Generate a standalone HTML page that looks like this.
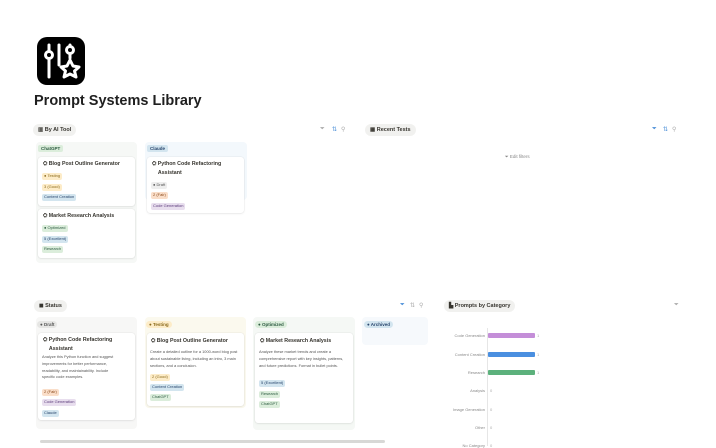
<!DOCTYPE html>
<html><head><meta charset="utf-8"><style>
*{margin:0;padding:0;box-sizing:border-box}
body{width:716px;height:446px;overflow:hidden;background:#fff;font-family:"Liberation Sans",sans-serif;color:#37352f;position:relative}
.a{position:absolute}
.chip{position:absolute;height:12px;border-radius:6px;background:#f1f1ef;font-size:5.5px;font-weight:bold;line-height:12px;padding:0 5px;color:#37352f;white-space:nowrap}
.col{position:absolute;border-radius:4px}
.card{position:absolute;background:#fff;border-radius:3px;box-shadow:0 0 0 .5px rgba(0,0,0,.06),0 1px 2px rgba(0,0,0,.06)}
.t{position:absolute;font-size:5.3px;font-weight:bold;line-height:8.5px;color:#37352f}
.tag{position:absolute;height:6.5px;line-height:6.5px;font-size:4px;padding:0 2px;border-radius:2px;white-space:nowrap}
.gh{position:absolute;height:7px;line-height:7px;font-size:4.5px;font-weight:bold;padding:0 3px;border-radius:2px}
.d{font-size:3.9px;line-height:6.8px;color:#555;position:absolute}
.lbl{position:absolute;font-size:4px;color:#888;text-align:right;width:70px}
.bar{position:absolute;height:5px;border-radius:1px}
.n{position:absolute;font-size:4px;color:#aaa}
.ic{position:absolute;font-size:6px;color:#aaa}
.ic.b{color:#4a8ed8}
</style></head><body>
<svg class="a" style="left:37px;top:37px" width="48" height="48" viewBox="0 0 48 48">
<rect width="48" height="48" rx="10" fill="#000"/>
<g stroke="#fff" stroke-width="3" fill="none" stroke-linecap="round">
<line x1="12" y1="8" x2="12" y2="40"/><circle cx="12" cy="18" r="3.5" fill="#000"/>
<line x1="22" y1="8" x2="22" y2="28"/>
<circle cx="33" cy="13" r="3.5"/><line x1="33" y1="8" x2="33" y2="9"/><line x1="33" y1="17" x2="33" y2="21"/>
<path d="M33 23 L36 29 L42 30 L37.5 34 L39 40 L33 37 L27 40 L28.5 34 L24 30 L30 29 Z" stroke-linejoin="round"/>
</g></svg>
<div class="a" style="left:34px;top:93px;font-size:14.5px;font-weight:bold;color:#1f1f1f">Prompt Systems Library</div>

<div class="chip" style="left:33px;top:124px">▥ By AI Tool</div>
<div class="ic" style="left:320px;top:126px">⏷</div><div class="ic b" style="left:332px;top:126px">⇅</div><div class="ic" style="left:341px;top:126px">⚲</div>

<div class="col" style="left:36px;top:142px;width:101px;height:121px;background:#f6f8f6"></div>
<div class="gh" style="left:38px;top:145px;background:#dbeddb;color:#2b593f">ChatGPT</div>
<div class="card" style="left:38px;top:157px;width:97px;height:49px"></div>
<div class="t" style="left:43px;top:160px">⛭ Blog Post Outline Generator</div>
<div class="tag" style="left:42px;top:173px;background:#fdecc8;color:#8a6a1c">● Testing</div>
<div class="tag" style="left:42px;top:184px;background:#fdecc8;color:#8a6a1c">3 (Good)</div>
<div class="tag" style="left:42px;top:194px;background:#d3e5ef;color:#28456c">Content Creation</div>
<div class="card" style="left:38px;top:209px;width:97px;height:49px"></div>
<div class="t" style="left:43px;top:212px">⛭ Market Research Analysis</div>
<div class="tag" style="left:42px;top:225px;background:#dbeddb;color:#2b593f">● Optimized</div>
<div class="tag" style="left:42px;top:236px;background:#d3e5ef;color:#28456c">5 (Excellent)</div>
<div class="tag" style="left:42px;top:246px;background:#dbeddb;color:#2b593f">Research</div>

<div class="col" style="left:145px;top:142px;width:102px;height:58px;background:#f3f8fc"></div>
<div class="gh" style="left:147px;top:145px;background:#d3e5ef;color:#28456c">Claude</div>
<div class="card" style="left:147px;top:157px;width:97px;height:56px"></div>
<div class="t" style="left:152px;top:160px;width:88px">⛭ Python Code Refactoring<br>&nbsp;&nbsp;&nbsp;&nbsp;Assistant</div>
<div class="tag" style="left:151px;top:182px;background:#eee;color:#555">● Draft</div>
<div class="tag" style="left:151px;top:192px;background:#fadec9;color:#8a4a1c">2 (Fair)</div>
<div class="tag" style="left:151px;top:203px;background:#e8deee;color:#5a3a7a">Code Generation</div>

<div class="chip" style="left:365px;top:124px">▦ Recent Tests</div>
<div class="ic b" style="left:652px;top:126px">⏷</div><div class="ic b" style="left:663px;top:126px">⇅</div><div class="ic" style="left:672px;top:126px">⚲</div>
<div class="a" style="left:505px;top:154px;font-size:4.5px;color:#888">⏷ Edit filters</div>

<div class="chip" style="left:34px;top:300px">◼ Status</div>
<div class="ic b" style="left:400px;top:302px">⏷</div><div class="ic" style="left:410px;top:302px">⇅</div><div class="ic" style="left:419px;top:302px">⚲</div>

<div class="col" style="left:36px;top:317px;width:101px;height:112px;background:#f7f7f6"></div>
<div class="gh" style="left:37px;top:321px;background:#e6e6e4;color:#555;border-radius:4px">● Draft</div>
<div class="card" style="left:38px;top:333px;width:97px;height:87px"></div>
<div class="t" style="left:43px;top:336px;width:90px">⛭ Python Code Refactoring<br>&nbsp;&nbsp;&nbsp;&nbsp;Assistant</div>
<div class="d" style="left:42px;top:354px;width:80px">Analyze this Python function and suggest improvements for better performance, readability, and maintainability. Include specific code examples.</div>
<div class="tag" style="left:42px;top:389px;background:#fadec9;color:#8a4a1c">2 (Fair)</div>
<div class="tag" style="left:42px;top:399px;background:#e8deee;color:#5a3a7a">Code Generation</div>
<div class="tag" style="left:42px;top:410px;background:#d3e5ef;color:#28456c">Claude</div>

<div class="col" style="left:145px;top:317px;width:101px;height:91px;background:#fbf9ee"></div>
<div class="gh" style="left:146px;top:321px;background:#fdecc8;color:#8a6a1c;border-radius:4px">● Testing</div>
<div class="card" style="left:147px;top:333px;width:97px;height:73px"></div>
<div class="t" style="left:151px;top:337px">⛭ Blog Post Outline Generator</div>
<div class="d" style="left:150px;top:349px;width:92px">Create a detailed outline for a 1000-word blog post about sustainable living, including an intro, 3 main sections, and a conclusion.</div>
<div class="tag" style="left:150px;top:374px;background:#fdecc8;color:#8a6a1c">2 (Good)</div>
<div class="tag" style="left:150px;top:384px;background:#d3e5ef;color:#28456c">Content Creation</div>
<div class="tag" style="left:150px;top:394px;background:#dbeddb;color:#2b593f">ChatGPT</div>

<div class="col" style="left:253px;top:317px;width:102px;height:113px;background:#f5f8f5"></div>
<div class="gh" style="left:255px;top:321px;background:#dbeddb;color:#2b593f;border-radius:4px">● Optimized</div>
<div class="card" style="left:255px;top:333px;width:98px;height:90px"></div>
<div class="t" style="left:260px;top:337px">⛭ Market Research Analysis</div>
<div class="d" style="left:259px;top:349px;width:88px">Analyze these market trends and create a comprehensive report with key insights, patterns, and future predictions. Format in bullet points.</div>
<div class="tag" style="left:259px;top:380px;background:#d3e5ef;color:#28456c">5 (Excellent)</div>
<div class="tag" style="left:259px;top:391px;background:#dbeddb;color:#2b593f">Research</div>
<div class="tag" style="left:259px;top:401px;background:#dbeddb;color:#2b593f">ChatGPT</div>

<div class="col" style="left:362px;top:317px;width:66px;height:28px;background:#f6f9fc"></div>
<div class="gh" style="left:364px;top:321px;background:#d3e5ef;color:#28456c;border-radius:4px">● Archived</div>

<div class="a" style="left:40px;top:440px;width:345px;height:3px;background:#d8d8d6;border-radius:2px"></div>

<div class="chip" style="left:444px;top:300px">▙ Prompts by Category</div>
<div class="ic" style="left:674px;top:302px">⏷</div>
<div class="a" style="left:487px;top:328px;width:1px;height:118px;background:#e6e6e6"></div>
<div class="lbl" style="left:415px;top:333px">Code Generation</div><div class="bar" style="left:488px;top:333px;width:47px;background:#c48ed8"></div><div class="n" style="left:537px;top:333px">1</div>
<div class="lbl" style="left:415px;top:352px">Content Creation</div><div class="bar" style="left:488px;top:352px;width:47px;background:#4a8fe0"></div><div class="n" style="left:537px;top:352px">1</div>
<div class="lbl" style="left:415px;top:370px">Research</div><div class="bar" style="left:488px;top:370px;width:47px;background:#5cb17c"></div><div class="n" style="left:537px;top:370px">1</div>
<div class="lbl" style="left:415px;top:388px">Analysis</div><div class="n" style="left:490px;top:388px">0</div>
<div class="lbl" style="left:415px;top:407px">Image Generation</div><div class="n" style="left:490px;top:407px">0</div>
<div class="lbl" style="left:415px;top:425px">Other</div><div class="n" style="left:490px;top:425px">0</div>
<div class="lbl" style="left:415px;top:443px">No Category</div><div class="n" style="left:490px;top:443px">0</div>
</body></html>
